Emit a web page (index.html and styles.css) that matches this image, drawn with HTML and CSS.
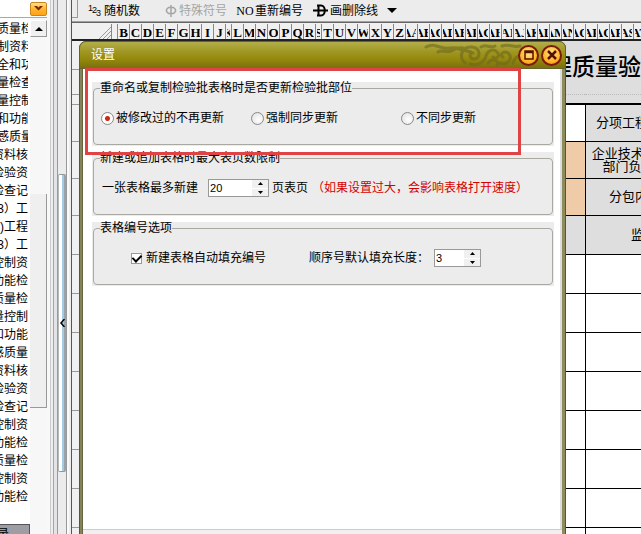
FILE: index.html
```html
<!DOCTYPE html>
<html lang="zh-CN">
<head>
<meta charset="UTF-8" />
<meta name="viewport" content="width=device-width, initial-scale=1" />
<title>设置</title>
<link rel="stylesheet" href="styles.css">
</head>
<body>
<div class="app">

  <aside class="tree">
    <div class="tree-combo"><button class="combo-btn" aria-label="展开"><svg width="9" height="5" viewBox="0 0 9 5"><path d="M0 0h3l1.500 1.500L6 0h3L4.500 4.500z" fill="#7a2a00"/></svg></button></div>
    <div class="tree-body">
      <ul class="tree-list">
        <li class="outer">质量检</li>
        <li class="outer">制资料</li>
        <li class="outer">全和功</li>
        <li class="outer">量检查</li>
        <li class="outer">量控制</li>
        <li class="outer">和功能</li>
        <li class="outer">感质量</li>
        <li>资料核</li>
        <li>检验资</li>
        <li>检查记</li>
        <li>3）工</li>
        <li>)工程</li>
        <li>3）工</li>
        <li>控制资</li>
        <li>功能检</li>
        <li>质量检</li>
        <li>量控制</li>
        <li>和功能</li>
        <li>感质量</li>
        <li>资料核</li>
        <li>检验资</li>
        <li>检查记</li>
        <li>控制资</li>
        <li>功能检</li>
        <li>质量检</li>
        <li>控制资</li>
        <li>功能检</li>
        <li></li>
        <li class="outer selected">录</li>
      </ul>
      <div class="scrollbar">
        <button class="scroll-up" aria-label="向上"><svg width="8" height="4" viewBox="0 0 8 4"><path d="M4 0l4 4H0z"/></svg></button>
        <div class="scroll-thumb"></div>
      </div>
    </div>
  </aside>

  <div class="splitter">
    <div class="splitter-bar">
      <button class="splitter-handle" aria-label="折叠"><svg width="5" height="8" viewBox="0 0 5 8"><path d="M4.500 0L1 4l3.500 4" fill="none" stroke="#000" stroke-width="1.500"/></svg></button>
    </div>
  </div>

  <main class="main">
    <div class="toolbar">
      <span class="grip"></span>
      <button class="tool"><span class="icon-num"><i>1</i><i>2</i><i>3</i></span>随机数</button>
      <button class="tool tool-symbol" disabled><svg width="12" height="14" viewBox="0 0 12 14"><path d="M6 1v12M3.500 3.500h5l2 2v2l-2 2h-5l-2-2v-2z" fill="none" stroke="#a5a5a5" stroke-width="1.500"/></svg>特殊符号</button>
      <button class="tool"><span class="icon-no">NO</span>重新编号</button>
      <button class="tool"><svg width="15" height="13" viewBox="0 0 15 13"><path d="M4 1.500h4c5 0 5 10 0 10H4M5.500 1.500v10M0 6.500h15" fill="none" stroke="#000" stroke-width="2"/></svg>画删除线<svg class="tool-arrow" width="10" height="5" viewBox="0 0 10 5"><path d="M0 0h10L5 5z"/></svg></button>
    </div>

    <div class="columns">
      <div class="corner"><svg width="12" height="12" viewBox="0 0 12 12"><path d="M0 12L12 0M4 12l8-8M8 12l4-4" stroke="#999" fill="none"/></svg></div>
      <span class="col tiny"></span>
      <span class="col">B</span><span class="col">C</span><span class="col">D</span><span class="col">E</span><span class="col">F</span><span class="col">G</span><span class="col">H</span><span class="col">I</span><span class="col">J</span><span class="col tiny">K</span><span class="col">L</span><span class="col">M</span><span class="col">N</span><span class="col">O</span><span class="col">P</span><span class="col">Q</span><span class="col">R</span><span class="col tiny">S</span><span class="col">T</span><span class="col">U</span><span class="col">V</span><span class="col">W</span><span class="col">X</span><span class="col">Y</span><span class="col">Z</span><span class="col">AA</span><span class="col">AB</span><span class="col">AC</span><span class="col">AD</span><span class="col">AE</span><span class="col">AF</span><span class="col">AG</span><span class="col">AH</span><span class="col">AI</span><span class="col">AJ</span><span class="col">AK</span><span class="col">AL</span><span class="col">AM</span><span class="col">AN</span><span class="col">AO</span><span class="col">AP</span><span class="col">AQ</span><span class="col">AR</span><span class="col">AS</span><span class="col">AT</span>
    </div>

    <table class="sheet">
      <colgroup><col class="c-head"><col class="c-form"><col class="c-label"><col class="c-rest"></colgroup>
      <tr class="r-title"><th></th><td colspan="3" rowspan="2" class="title">工程质量验收记录</td></tr>
      <tr class="r-sub"><th></th></tr>
      <tr class="r-gap"><th></th><td colspan="3" class="gap"></td></tr>
      <tr class="r-info"><th></th><td></td><td class="label">分项工程数量</td><td></td></tr>
      <tr class="r-info"><th></th><td class="fill"></td><td class="label">企业技术(质量)<br>部门负责人</td><td></td></tr>
      <tr class="r-info"><th></th><td class="fill"></td><td class="label">分包内容</td><td></td></tr>
      <tr><th></th><td class="label"></td><td class="label" colspan="2">监理单位</td></tr>
      <tr><th></th><td></td><td></td><td></td></tr>
      <tr><th></th><td></td><td></td><td></td></tr>
      <tr><th></th><td></td><td></td><td></td></tr>
      <tr><th></th><td></td><td></td><td></td></tr>
      <tr><th></th><td></td><td></td><td></td></tr>
      <tr><th></th><td></td><td></td><td></td></tr>
      <tr><th></th><td></td><td></td><td></td></tr>
      <tr><th></th><td></td><td></td><td></td></tr>
    </table>

    <form class="dialog" role="dialog" aria-labelledby="dialog-title">
      <header class="dialog-head">
        <h1 id="dialog-title">设置</h1>
        <svg class="ornament" width="112" height="24" viewBox="0 0 112 24" fill="none" stroke="#6f681c" stroke-width="3" stroke-linecap="round">
          <path d="M2 4c7-4 12 0 18 1s9-2 15 1l12 3M14 9c4-3 8 1 13-1s6-4 12-3" />
          <path d="M41 20c-7-6-3-17 7-16 9 1 9 12 2 12-5 0-5-7-1-6" />
          <path d="M46 21c8 3 15-3 16-8s7-8 11-4-1 8-4 5M64 20c4-6 12-2 9 2M76 20c7 3 13-4 9-9s-11 1-6 3" />
          <path d="M57 4c6-4 8 2 14-1M78 3c7-3 11 2 18 0M89 20c2-7 8-9 14-6" />
        </svg>
        <button type="button" class="win-btn" aria-label="最大化"><svg width="10" height="10" viewBox="0 0 10 10"><path d="M1 1h8v8H1zM1 2.500h8" fill="none" stroke="#5a1000" stroke-width="1.500"/></svg></button>
        <button type="button" class="win-btn" aria-label="关闭"><svg width="10" height="10" viewBox="0 0 10 10"><path d="M1 1l8 8M9 1L1 9" stroke="#5a1000" stroke-width="2.500"/></svg></button>
      </header>
      <div class="dialog-body">
        <div class="group">
          <fieldset>
            <legend>重命名或复制检验批表格时是否更新检验批部位</legend>
            <div class="radios">
              <label><input type="radio" name="sync" checked>被修改过的不再更新</label>
              <label><input type="radio" name="sync">强制同步更新</label>
              <label><input type="radio" name="sync">不同步更新</label>
            </div>
          </fieldset>
        </div>
        <div class="group">
          <fieldset>
            <legend>新建或追加表格时最大表页数限制</legend>
            <div class="line">
              <label for="pages">一张表格最多新建</label>
              <span class="spin"><input id="pages" type="text" value="20"><span class="spin-btns"><button type="button" aria-label="增加"><svg width="5" height="3" viewBox="0 0 5 3"><path d="M2.500 0L5 3H0z"/></svg></button><button type="button" aria-label="减少"><svg width="5" height="3" viewBox="0 0 5 3"><path d="M0 0h5L2.500 3z"/></svg></button></span></span>
              <span class="unit">页表页</span>
              <span class="warn">（如果设置过大，会影响表格打开速度）</span>
            </div>
          </fieldset>
        </div>
        <div class="group">
          <fieldset>
            <legend>表格编号选项</legend>
            <div class="line numbering">
              <label class="auto"><input type="checkbox" checked>新建表格自动填充编号</label>
              <label for="digits">顺序号默认填充长度：</label>
              <span class="spin spin-small"><input id="digits" type="text" value="3"><span class="spin-btns"><button type="button" aria-label="增加"><svg width="5" height="3" viewBox="0 0 5 3"><path d="M2.500 0L5 3H0z"/></svg></button><button type="button" aria-label="减少"><svg width="5" height="3" viewBox="0 0 5 3"><path d="M0 0h5L2.500 3z"/></svg></button></span></span>
            </div>
          </fieldset>
        </div>
      </div>
      <footer class="dialog-foot"></footer>
      <div class="marker"></div>
    </form>
  </main>
</div>
</body>
</html>
```

FILE: styles.css
```css
* {
  box-sizing: border-box;
}
body {
  margin: 0;
  font-family: "Liberation Sans", "Noto Sans CJK SC", sans-serif;
  font-size: 12px;
  line-height: 18px;
  color: #000;
  background: #f0f0f0;
}
button, input {
  font: inherit;
  color: inherit;
}
button {
  padding: 0;
  border: none;
  background: none;
}
svg {
  display: block;
  flex: none;
}
.app {
  display: flex;
  height: 100vh;
  overflow: hidden;
}

/* tree on the left */
.tree {
  width: 47px;
  flex: none;
  display: flex;
  flex-direction: column;
}
.tree-combo {
  height: 18px;
  flex: none;
  background: #fff;
  border-bottom: 1px solid #a8a8a8;
  display: flex;
  justify-content: flex-end;
  align-items: center;
}
.combo-btn {
  width: 17px;
  height: 14px;
  border: 1px solid #c9831f;
  border-radius: 2px;
  background: linear-gradient(#ffe08a, #ffb52e 50%, #ffa21a);
  display: flex;
  align-items: center;
  justify-content: center;
}
.tree-body {
  flex: 1;
  min-height: 0;
  display: flex;
}
.tree-list {
  list-style: none;
  width: 30px;
  margin: 0;
  padding: 2px 2px 0 0;
  background: #fff;
  overflow: hidden;
}
.tree-list li {
  height: 18px;
  overflow: hidden;
  white-space: nowrap;
  display: flex;
  justify-content: flex-end;
}
.tree-list .outer {
  justify-content: flex-start;
  text-indent: -3px;
}
.tree-list .selected {
  margin-right: -2px;
  background: #9d9da3;
  border: 1px solid #555;
  border-left: none;
}
.scrollbar {
  flex: 1;
  padding-top: 2px;
  background: #f7f7f7;
}
.scroll-up {
  width: 17px;
  height: 17px;
  background: #f0f0f0;
  border: 1px solid #fff;
  border-right-color: #999;
  border-bottom-color: #999;
  display: flex;
  align-items: center;
  justify-content: center;
}
.scroll-thumb {
  height: 214px;
  margin-top: 157px;
  background: #efefef;
  border-right: 1px solid #999;
  border-bottom: 1px solid #999;
}

.splitter {
  width: 25px;
  flex: none;
  display: flex;
  padding-left: 7px;
  border-left: 3px solid #f8f8f8;
  background: linear-gradient(90deg, #ccc 1px, #eee 1px 3px, #a7a3a7 3px 4px, #e4e4e8 4px 17px, #fafafa 17px 19px, #ededed 19px);
  border-right: 1px solid #555;
}
.splitter-bar {
  width: 10px;
  padding-top: 174px;
  background: #ececec;
  border-left: 1px solid #999;
  border-right: 1px solid #999;
}
.splitter-handle {
  width: 8px;
  height: 298px;
  border-radius: 2px;
  border: 1px solid #8f9a9e;
  border-width: 1px 0;
  background: linear-gradient(90deg, #b5b9b9 1px, #fff 1px 4px, #a6cbe0 4px 6px, #98a3ab 6px);
  display: flex;
  align-items: center;
  justify-content: center;
}

/* toolbar */
.main {
  flex: 1;
  min-width: 0;
  position: relative;
  overflow: hidden;
  background: #f0f0f0;
}
.toolbar {
  height: 22px;
  display: flex;
  align-items: center;
  background: #ececec;
  border-bottom: 1px solid #a0a0a0;
  white-space: nowrap;
}
.grip {
  width: 6px;
  height: 18px;
  margin-right: 10px;
  align-self: flex-start;
  border-right: 1px solid #999;
  border-bottom: 1px solid #999;
}
.tool {
  display: flex;
  align-items: center;
  gap: 2px;
  margin-right: 10px;
}
.tool-symbol {
  margin: 0 10px 0 15px;
}
.tool:disabled {
  color: #a5a5a5;
}
.tool-arrow {
  margin-left: 7px;
}
.icon-num {
  display: flex;
  align-items: center;
  width: 14px;
  font-size: 9px;
  line-height: 9px;
}
.icon-num i {
  width: 4px;
  font-style: normal;
}
.icon-num i:first-child {
  padding-bottom: 5px;
}
.icon-num i:last-child {
  padding-top: 5px;
}
.icon-no {
  width: 16px;
  font: 12px/18px "Liberation Serif", serif;
  display: flex;
  justify-content: center;
}

/* sheet */
.columns {
  height: 19px;
  display: flex;
  padding-top: 1px;
  border-bottom: 2px solid #222;
  background: #f0f0f0;
  overflow: hidden;
  border-top: 1px solid #666;
}
.corner {
  width: 40px;
  flex: none;
  display: flex;
  justify-content: flex-end;
  align-items: flex-end;
  border-right: 1px solid #888;
}
.col {
  width: 12px;
  flex: none;
  padding: 0 1px;
  overflow: clip;
  overflow-clip-margin: content-box;
  display: flex;
  justify-content: center;
  border-right: 1px solid #888;
  font: bold 13px/17px "Liberation Serif", serif;
}
.col.tiny {
  width: 6px;
}
.sheet {
  width: 657px;
  table-layout: fixed;
  border-collapse: collapse;
  background: #fff;
}
.c-head {
  width: 40px;
}
.c-form {
  width: 473px;
}
.c-label {
  width: 100px;
}
.c-rest {
  width: 44px;
}
.sheet tr {
  height: 39px;
}
.sheet .r-title {
  height: 28px;
}
.sheet .r-sub {
  height: 25px;
}
.sheet .r-gap {
  height: 10px;
}
.sheet .r-info {
  height: 37px;
}
.sheet th {
  padding: 0;
  background: #f0f0f0;
  border-bottom: 1px solid #999;
}
.sheet td {
  padding: 0;
  border: 1px solid #000;
  font-size: 13px;
  line-height: 13px;
  text-align: center;
  white-space: nowrap;
}
.sheet .title {
  padding-left: 414px;
  background: #dedede;
  border: none;
  border-bottom: 1px dotted #bbb;
  text-align: left;
  font-size: 23px;
  font-weight: 500;
  line-height: 24px;
}
.sheet .gap {
  background: #dedede;
  border-top: none;
  border-bottom: 2px solid #000;
}
.sheet .fill {
  background: #f0cba7;
}
.sheet .label {
  background: #dedede;
}

/* settings window */
.dialog {
  position: absolute;
  left: 7px;
  top: 41px;
  bottom: -6px;
  width: 487px;
  display: flex;
  flex-direction: column;
  padding: 0 4px;
  border-radius: 7px 7px 0 0;
  background: linear-gradient(90deg, #57563a 1px, #85835a 1px 3px, #66653f 3px 10px, #66653f 483px, #8d8c5c 483px 486px, #57563a 486px);
}
.dialog-head {
  height: 28px;
  flex: none;
  margin: 0 -4px;
  padding: 0 3px 0 11px;
  display: flex;
  align-items: center;
  gap: 2px;
  border: 1px solid #66622c;
  border-radius: 7px 7px 0 0;
  background: linear-gradient(#b3ae4a, #a09825 35%, #958a0c 65%, #7a7010);
}
.dialog-head h1 {
  flex: 1;
  margin: 0;
  font-size: 12px;
  font-weight: normal;
  color: #fff;
}
.ornament {
  margin-right: -20px;
  opacity: 0.6;
}
.win-btn {
  width: 21px;
  height: 21px;
  position: relative;
  border: 2px solid #7c1a08;
  border-radius: 50%;
  background: radial-gradient(circle at 50% 35%, #ffe98a, #ffb52b 60%, #f08a10);
  display: flex;
  align-items: center;
  justify-content: center;
}
.dialog-body {
  flex: 1;
  padding: 13px 6px 0 9px;
  background: #fff;
  border-right: 2px solid #ddd;
  display: flex;
  flex-direction: column;
  gap: 6px;
}
.dialog-foot {
  height: 11px;
  background: #f0f0f0;
  border-top: 1px solid #ccc;
}
.group {
  height: 64px;
  background: #ececec;
}
fieldset {
  height: 63px;
  margin: 0 1px;
  padding: 0 7px;
  border: 1px solid #a9a9a1;
  border-radius: 4px;
}
legend {
  padding: 0;
  margin-left: -1px;
  line-height: 12px;
}
.radios {
  display: grid;
  grid-template-columns: 150px 150px auto;
  padding-top: 15px;
}
label {
  display: flex;
  align-items: center;
  white-space: nowrap;
}
input[type="radio"] {
  appearance: none;
  width: 13px;
  height: 13px;
  margin: 0 2px 0 0;
  border: 1px solid #888;
  border-radius: 50%;
  background: radial-gradient(circle at 60% 60%, #fff, #ddd);
}
input[type="radio"]:checked {
  background: radial-gradient(circle, #d02810 2px, #fff 3px);
}
input[type="checkbox"] {
  appearance: none;
  width: 11px;
  height: 11px;
  margin: 0 4px 0 0;
  border: 1px solid #999;
  background: #fff;
  display: flex;
  align-items: center;
  justify-content: center;
}
input[type="checkbox"]:checked::before {
  content: "";
  width: 4px;
  height: 7px;
  margin-bottom: 2px;
  border: solid #000;
  border-width: 0 2px 2px 0;
  transform: rotate(45deg);
}
.line {
  display: flex;
  align-items: center;
  padding: 15px 0 0 1px;
  white-space: nowrap;
}
.spin {
  width: 61px;
  height: 18px;
  margin: 0 3px 0 10px;
  display: flex;
  border: 1px solid #999;
  background: #fff;
}
.spin input {
  flex: 1;
  min-width: 0;
  padding: 0 0 0 1px;
  border: none;
  outline: none;
  background: none;
  font-size: 11px;
  line-height: 16px;
}
.spin-btns {
  width: 16px;
  display: flex;
  flex-direction: column;
  gap: 1px;
}
.spin-btns button {
  flex: 1;
  background: #f0f0f0;
  display: flex;
  align-items: center;
  justify-content: center;
}
.warn {
  margin-left: 4px;
  color: #d40000;
}
.numbering {
  padding-left: 30px;
}
.auto {
  width: 178px;
}
.spin-small {
  width: 47px;
  margin-left: 5px;
}

/* red frame over the first group */
.marker {
  position: absolute;
  left: 6px;
  top: 27px;
  width: 436px;
  height: 87px;
  border: 3px solid #e04343;
  pointer-events: none;
}
```
